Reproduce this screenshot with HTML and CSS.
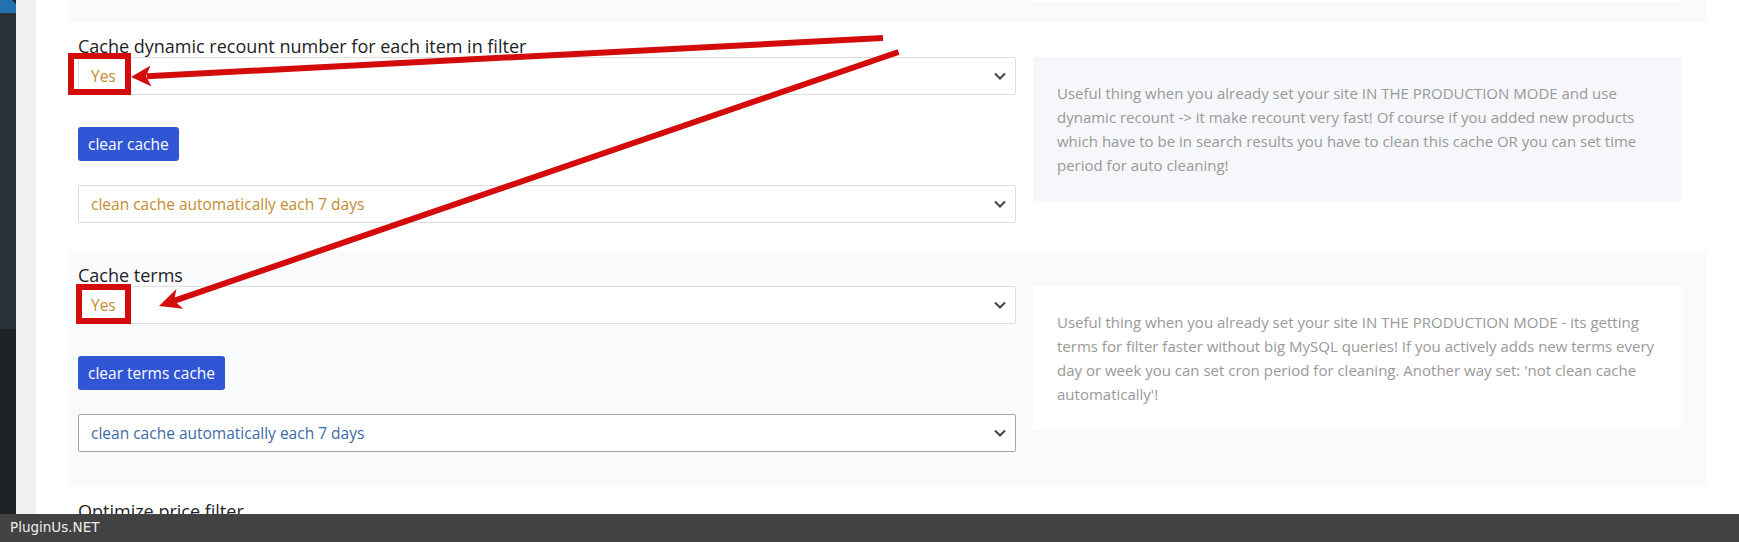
FILE: index.html
```html
<!DOCTYPE html>
<html lang="en">
  <head>
    <meta charset="UTF-8" />
    <meta name="viewport" content="width=device-width, initial-scale=1.0" />
    <title>Filter cache options</title>
    <link rel="stylesheet" href="styles.css">
  </head>
  <body>
    <div class="page">
      <div class="adminmenu">
        <div class="menu-current"></div>
        <div class="menu-top"></div>
      </div>
      <div class="gutter"></div>

      <div class="options">
        <!-- tail of the previous option row -->
        <div class="option-row alt row-tail">
          <div class="tail-box"></div>
        </div>

        <div class="option-row first">
          <div class="option-main">
            <label class="option-label">Cache dynamic recount number for each item in filter</label>
            <div class="select">
              <span class="val-yes">Yes</span>
              <svg class="chevron" width="12" height="8" viewBox="0 0 12 8"><path d="M1 1.5l5 5 5-5" fill="none" stroke="#444" stroke-width="2"/></svg>
            </div>
            <button class="btn">clear cache</button>
            <div class="select">
              <span class="val-yes">clean cache automatically each 7 days</span>
              <svg class="chevron" width="12" height="8" viewBox="0 0 12 8"><path d="M1 1.5l5 5 5-5" fill="none" stroke="#444" stroke-width="2"/></svg>
            </div>
          </div>
          <div class="option-info">
            <p>Useful thing when you already set your site IN THE PRODUCTION MODE and use dynamic recount -&gt; it make recount very fast! Of course if you added new products which have to be in search results you have to clean this cache OR you can set time period for auto cleaning!</p>
          </div>
        </div>

        <div class="option-row alt second">
          <div class="option-main">
            <label class="option-label">Cache terms</label>
            <div class="select">
              <span class="val-yes">Yes</span>
              <svg class="chevron" width="12" height="8" viewBox="0 0 12 8"><path d="M1 1.5l5 5 5-5" fill="none" stroke="#444" stroke-width="2"/></svg>
            </div>
            <button class="btn">clear terms cache</button>
            <div class="select focused">
              <span class="val-blue">clean cache automatically each 7 days</span>
              <svg class="chevron" width="12" height="8" viewBox="0 0 12 8"><path d="M1 1.5l5 5 5-5" fill="none" stroke="#444" stroke-width="2"/></svg>
            </div>
          </div>
          <div class="option-info">
            <p>Useful thing when you already set your site IN THE PRODUCTION MODE - its getting terms for filter faster without big MySQL queries! If you actively adds new terms every day or week you can set cron period for cleaning. Another way set: 'not clean cache automatically'!</p>
          </div>
        </div>

        <div class="option-row">
          <div class="option-main">
            <label class="option-label">Optimize price filter</label>
          </div>
        </div>
      </div>
    </div>

    <!-- annotation arrows drawn over the screenshot -->
    <svg class="marks" width="1739" height="542" viewBox="0 0 1739 542">
      <rect x="71" y="56" width="57" height="36" fill="none" stroke="#d30b0b" stroke-width="6"/>
      <rect x="79" y="287" width="49" height="34" fill="none" stroke="#d30b0b" stroke-width="6"/>
      <line x1="883" y1="38" x2="147" y2="76.2" stroke="#d30b0b" stroke-width="6"/>
      <polygon points="131,77 150.5,65.5 146,76.2 151.5,86.5" fill="#d30b0b"/>
      <line x1="898.5" y1="52" x2="174" y2="300.8" stroke="#d30b0b" stroke-width="6"/>
      <polygon points="159,306 176.4,288.9 174.1,300.8 183.2,308.8" fill="#d30b0b"/>
    </svg>

    <div class="watermark">PluginUs.NET</div>
  </body>
</html>
```

FILE: styles.css
```css
body {
  margin: 0;
  height: 542px;
  overflow: hidden;
  background-color: #fff;
  font-family: "Open Sans", Lato, sans-serif;
}
.page {
  display: flex;
  height: 542px;
}
.adminmenu {
  width: 16px;
  display: flex;
  flex-direction: column;
  background-color: #1d2327;
}
.menu-current {
  height: 13px;
  background-color: #2271b1;
  clip-path: polygon(0 0, 12px 0, 16px 4px, 16px 100%, 0 100%);
}
.menu-top {
  height: 316px;
  background-color: #2c3338;
}
.gutter {
  width: 20px;
  background-color: #f0f0f1;
}
.options {
  flex: 1;
  padding: 0 32px;
}
.option-row {
  display: flex;
  gap: 17px;
  padding: 13px 26px 28px 10px;
}
.option-row.alt {
  background-color: #f9fafc;
}
.option-row.second {
  padding-bottom: 35px;
}
.row-tail {
  height: 22px;
  padding: 0 26px 0 10px;
  box-sizing: border-box;
  justify-content: flex-end;
  align-items: flex-start;
}
.tail-box {
  width: 648px;
  height: 2px;
  background-color: #fff;
}
.option-main {
  width: 938px;
  display: flex;
  flex-direction: column;
  align-items: flex-start;
}
.option-label {
  font-size: 18px;
  line-height: 22px;
  color: #1d2327;
}
.select {
  width: 100%;
  height: 38px;
  box-sizing: border-box;
  display: flex;
  align-items: center;
  justify-content: space-between;
  padding: 0 9px 0 12px;
  border: 1px solid #dedede;
  border-radius: 2px;
  background-color: #fff;
  font-size: 15.5px;
}
.select.focused {
  border-color: #a5a5a5;
}
.val-yes {
  color: #c38d31;
}
.val-blue {
  color: #3b6ba6;
}
.btn {
  margin: 32px 0 24px;
  height: 34px;
  padding: 0 10px;
  border: none;
  border-radius: 3px;
  background-color: #3055d5;
  color: #fff;
  font-family: "Open Sans", Lato, sans-serif;
  font-size: 15.5px;
}
.option-info {
  width: 648px;
  margin-top: 22px;
  align-self: flex-start;
  padding: 24px;
  box-sizing: border-box;
  background-color: #f6f7fa;
}
.alt .option-info {
  background-color: #fff;
}
.option-info p {
  margin: 0;
  font-size: 15px;
  line-height: 24px;
  color: #999;
}
.marks {
  position: absolute;
  top: 0;
  left: 0;
  pointer-events: none;
}
.watermark {
  position: fixed;
  left: 0;
  right: 0;
  bottom: 0;
  height: 28px;
  padding-left: 10px;
  background-color: #424242;
  color: #eee;
  font-family: "DejaVu Sans", sans-serif;
  font-size: 13.5px;
  line-height: 27px;
}
```
